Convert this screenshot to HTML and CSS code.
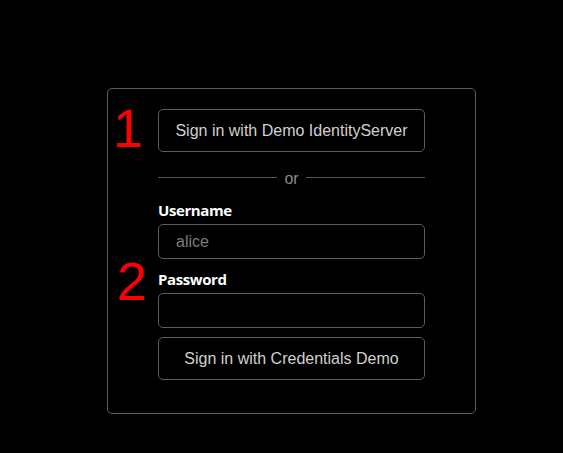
FILE: index.html
```html
<!DOCTYPE html>
<html lang="en">
<head>
<meta charset="utf-8">
<title>Sign in</title>
<link rel="stylesheet" href="styles.css">
</head>
<body>
<div class="page">
  <div class="card">
    <span class="mark mark-1">1</span>
    <span class="mark mark-2">2</span>
    <button class="btn" type="button">Sign in with Demo IdentityServer</button>
    <div class="divider"><span class="line"></span><span class="or">or</span><span class="line"></span></div>
    <form class="form">
      <label class="label label-user" for="username">Username</label>
      <input class="input" id="username" type="text" placeholder="alice">
      <label class="label label-pass" for="password">Password</label>
      <input class="input" id="password" type="password">
      <button class="btn btn-submit" type="button">Sign in with Credentials Demo</button>
    </form>
  </div>
</div>
</body>
</html>
```

FILE: styles.css
```css
html, body {
  margin: 0;
  padding: 0;
  background: #000;
}
body {
  font-family: "Liberation Sans", Arial, sans-serif;
  color: #ccc;
}
.page {
  padding: 88px 0 0 107px;
}
.card {
  position: relative;
  box-sizing: border-box;
  width: 369px;
  border: 1px solid #5c5c5c;
  border-radius: 5px;
  padding: 20px 50px 33px 50px;
  display: flex;
  flex-direction: column;
}
.mark {
  position: absolute;
  font-family: "Liberation Sans", Arial, sans-serif;
  font-size: 54px;
  line-height: 1;
  color: #ff0000;
}
.mark-1 {
  left: 5px;
  top: 12px;
}
.mark-2 {
  left: 9px;
  top: 165px;
}
.btn {
  box-sizing: border-box;
  width: 267px;
  height: 43px;
  margin: 0;
  padding: 0;
  background: #000;
  color: #d0d0d0;
  border: 1px solid #5c5c5c;
  border-radius: 5px;
  font-family: "Liberation Sans", Arial, sans-serif;
  font-size: 16px;
}
.divider {
  margin-top: 16px;
  height: 18px;
  width: 267px;
  display: flex;
  align-items: center;
  gap: 7px;
}
.line {
  flex: 1;
  height: 1px;
  background: #555;
}
.or {
  font-size: 16px;
  line-height: 18px;
  color: #8a8a8a;
  position: relative;
  top: 2px;
}
.form {
  display: flex;
  flex-direction: column;
  margin: 0;
}
.label {
  font-family: "Open Sans", "Noto Sans", sans-serif;
  font-weight: 700;
  font-size: 15px;
  letter-spacing: -0.4px;
  line-height: 20px;
  color: #fff;
  margin-bottom: 4px;
}
.label-user {
  margin-top: 14px;
}
.label-pass {
  margin-top: 10px;
}
.input {
  box-sizing: border-box;
  width: 267px;
  height: 35px;
  margin: 0;
  padding: 0 17px;
  background: #000;
  color: #ddd;
  border: 1px solid #5c5c5c;
  border-radius: 5px;
  font-family: "Liberation Sans", Arial, sans-serif;
  font-size: 16px;
  outline: none;
}
.input::placeholder {
  color: #7a7a7a;
}
.btn-submit {
  margin-top: 9px;
}
```
